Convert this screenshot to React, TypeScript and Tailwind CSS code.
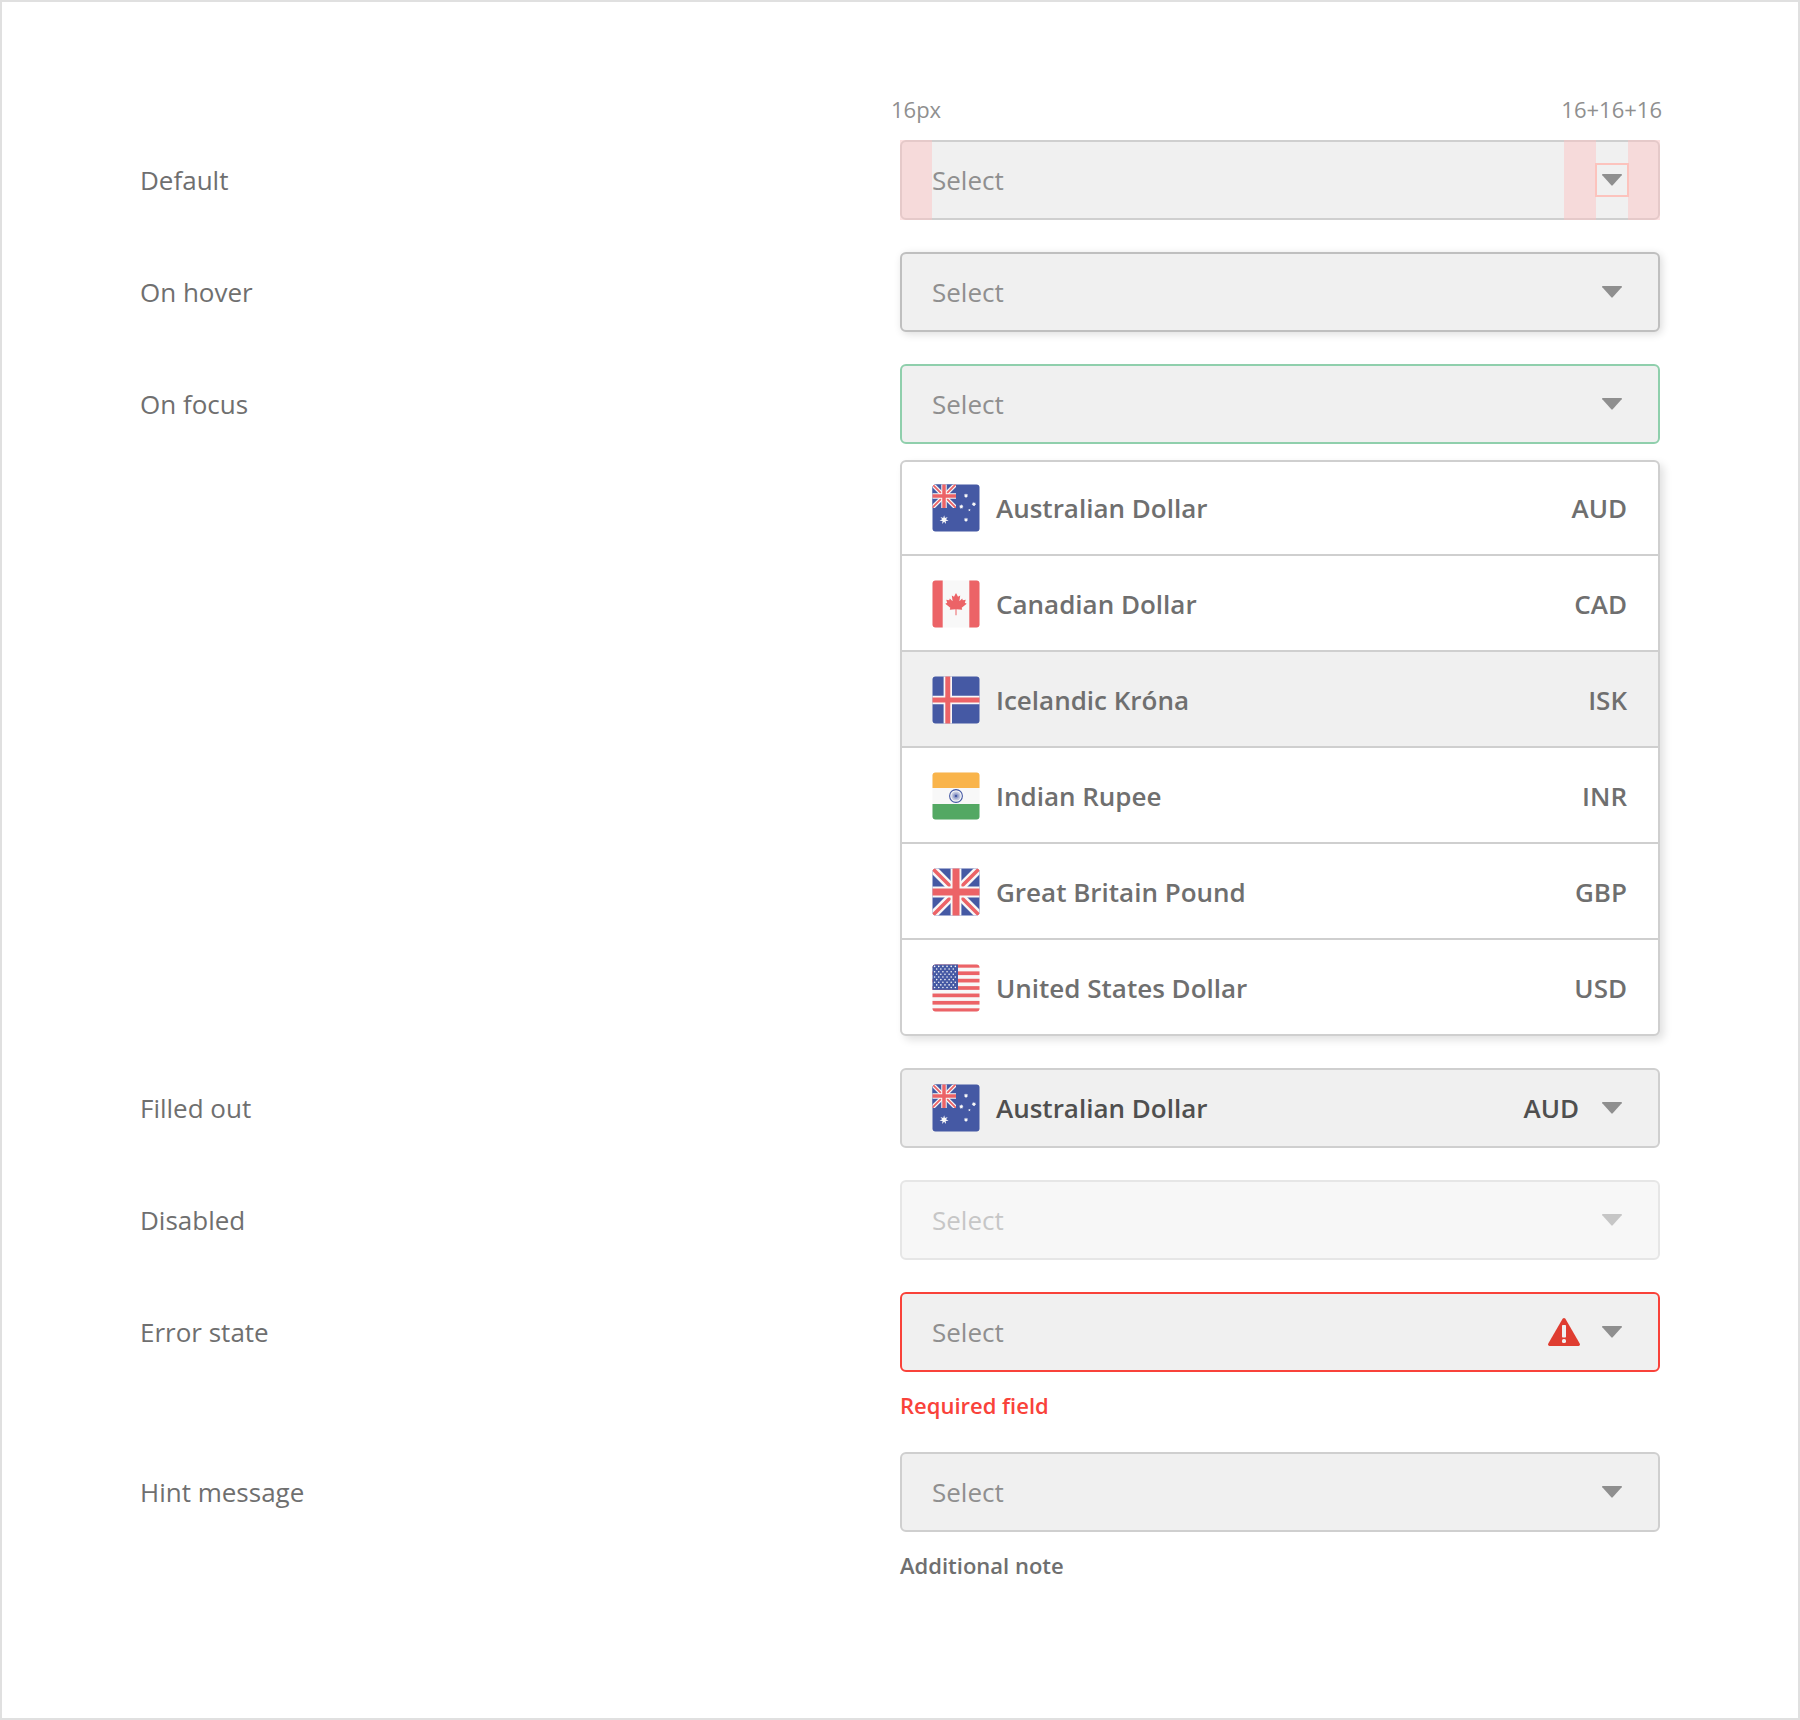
import type { ReactNode } from "react";

const BLUE = "#4559a4";
const RED = "#ec6367";
const WHITE = "#f8f8f8";

function Flag({ id, children }: { id: string; children: ReactNode }) {
  return (
    <svg viewBox="0 0 48 48" className="size-12 shrink-0">
      <clipPath id={id}>
        <rect x="0.5" y="0.5" width="47" height="47" rx="3" />
      </clipPath>
      <g clipPath={`url(#${id})`}>{children}</g>
    </svg>
  );
}

function UnionJack() {
  return (
    <>
      <rect width="48" height="48" fill={BLUE} />
      <path d="M0 0L48 48M48 0L0 48" stroke={WHITE} strokeWidth="8.4" />
      <path d="M0 0L18.6 18.6M48 0L29.4 18.6M0 48L18.6 29.4M48 48L29.4 29.4" stroke={RED} strokeWidth="3.6" />
      <path d="M24 0V48M0 24H48" stroke={WHITE} strokeWidth="10.8" />
      <path d="M24 0V48M0 24H48" stroke={RED} strokeWidth="7" />
    </>
  );
}

function starPoints(cx: number, cy: number, outer: number, inner: number, n: number) {
  return Array.from({ length: n * 2 }, (_, i) => {
    const r = i % 2 ? inner : outer;
    const a = (Math.PI * i) / n - Math.PI / 2;
    return `${(cx + r * Math.cos(a)).toFixed(2)},${(cy + r * Math.sin(a)).toFixed(2)}`;
  }).join(" ");
}

function AustraliaFlag({ id }: { id: string }) {
  return (
    <Flag id={id}>
      <rect width="48" height="48" fill={BLUE} />
      <svg width="24" height="24" viewBox="0 0 48 48">
        <UnionJack />
      </svg>
      <polygon points={starPoints(12.1, 35.8, 4.6, 2, 7)} fill={WHITE} />
      {[
        [34, 11.7],
        [29.3, 22.6],
        [41.9, 20.1],
        [34, 35.8],
      ].map(([x, y]) => (
        <polygon key={`${x}-${y}`} points={starPoints(x, y, 2.3, 1.3, 7)} fill={WHITE} />
      ))}
      <polygon points={starPoints(37.4, 26.1, 1.4, 0.6, 5)} fill={WHITE} />
    </Flag>
  );
}

function CanadaFlag() {
  return (
    <Flag id="flag-ca">
      <rect width="48" height="48" fill={WHITE} />
      <path d="M0 0H10.7V48H0zM37.3 0H48V48H37.3z" fill={RED} />
      <path
        d="M24 13L26 16.7L28.2 15.6L27.4 21.2L30.2 18.5L30.8 20.2L33.8 19.7L32.8 22.7L34.7 23.7L29.7 27.7L30.2 29.8L24.5 29.2V35.3H23.5V29.2L17.8 29.8L18.3 27.7L13.3 23.7L15.2 22.7L14.2 19.7L17.2 20.2L17.8 18.5L20.6 21.2L19.8 15.6L22 16.7z"
        fill={RED}
      />
    </Flag>
  );
}

function IcelandFlag() {
  return (
    <Flag id="flag-is">
      <rect width="48" height="48" fill={BLUE} />
      <path d="M15.8 0V48M0 24H48" stroke={WHITE} strokeWidth="8.4" />
      <path d="M15.8 0V48M0 24H48" stroke={RED} strokeWidth="5" />
    </Flag>
  );
}

function IndiaFlag() {
  return (
    <Flag id="flag-in">
      <rect width="48" height="48" fill={WHITE} />
      <rect width="48" height="16" fill="#f9b44b" />
      <rect y="32" width="48" height="16" fill="#53a863" />
      <circle cx="24" cy="24" r="6.4" fill="none" stroke={BLUE} strokeWidth="1.1" />
      <circle cx="24" cy="24" r="4.6" fill={BLUE} opacity="0.3" />
      <circle cx="24" cy="24" r="2.8" fill={BLUE} opacity="0.35" />
      <circle cx="24" cy="24" r="1.3" fill={BLUE} />
    </Flag>
  );
}

function BritainFlag() {
  return (
    <Flag id="flag-gb">
      <UnionJack />
    </Flag>
  );
}

function UsaFlag() {
  const stripe = 48 / 13;
  return (
    <Flag id="flag-us">
      <rect width="48" height="48" fill={WHITE} />
      {Array.from({ length: 7 }, (_, i) => (
        <rect key={i} y={i * 2 * stripe} width="48" height={stripe} fill={RED} />
      ))}
      <rect width="26" height={stripe * 7} fill={BLUE} />
      {Array.from({ length: 9 }, (_, row) =>
        Array.from({ length: row % 2 ? 5 : 6 }, (_, col) => (
          <circle
            key={`${row}-${col}`}
            cx={2.6 + col * 4.15 + (row % 2 ? 2.08 : 0)}
            cy={2.4 + row * 2.64}
            r="0.8"
            fill={WHITE}
          />
        )),
      )}
    </Flag>
  );
}

function Caret() {
  return (
    <svg viewBox="0 0 32 32" className="size-8 shrink-0">
      <path d="M6.6 10H25.4Q26.4 10.3 25.7 11.2L16.7 21.3Q16 22 15.3 21.3L6.3 11.2Q5.6 10.3 6.6 10z" fill="#8f8f8f" />
    </svg>
  );
}

function WarningIcon() {
  return (
    <svg viewBox="0 0 32 28" className="h-7 w-8 shrink-0">
      <path d="M14.6 0.8Q16 -0.8 17.4 0.8L31.7 25.6Q32.4 27.6 30.6 28H1.4Q-0.4 27.6 0.3 25.6z" fill="#df3d31" />
      <rect x="14" y="7" width="4" height="12.6" rx="0.8" fill="#f0f0f0" />
      <rect x="14" y="21" width="4" height="4" rx="1.6" fill="#f0f0f0" />
    </svg>
  );
}

function SelectBox({ className = "border-[#cfcfcf]", children }: { className?: string; children: ReactNode }) {
  return (
    <div className={`relative flex h-20 w-[760px] items-center rounded-[6px] border-2 bg-[#f0f0f0] px-[30px] ${className}`}>
      {children}
    </div>
  );
}

function Placeholder() {
  return <span className="grow text-[#8f8f8f]">Select</span>;
}

function Row({ label, className = "mt-8", children }: { label: string; className?: string; children: ReactNode }) {
  return (
    <div className={`flex items-start ${className}`}>
      <div className="flex h-20 w-[760px] items-center text-[#6f6f6f]">{label}</div>
      <div>{children}</div>
    </div>
  );
}

const currencies = [
  { name: "Australian Dollar", code: "AUD", flag: <AustraliaFlag id="flag-au" /> },
  { name: "Canadian Dollar", code: "CAD", flag: <CanadaFlag /> },
  { name: "Icelandic Króna", code: "ISK", flag: <IcelandFlag />, active: true },
  { name: "Indian Rupee", code: "INR", flag: <IndiaFlag /> },
  { name: "Great Britain Pound", code: "GBP", flag: <BritainFlag /> },
  { name: "United States Dollar", code: "USD", flag: <UsaFlag /> },
];

export default function App() {
  return (
    <div className="h-[1720px] w-[1800px] border-2 border-[#e0e0e0] bg-white pt-[90px] pl-[138px] font-['Open_Sans',sans-serif] text-[26px] leading-9">
      <div className="ml-[751px] flex h-12 w-[771px] justify-between pt-0.5 text-[22px] leading-[30px] text-[#8f8f8f]">
        <span>16px</span>
        <span>16+16+16</span>
      </div>

      <Row label="Default" className="">
        <SelectBox>
          <Placeholder />
          <Caret />
          <span className="absolute -top-0.5 -left-0.5 h-20 w-8 bg-[#fcc4c4]/50" />
          <span className="absolute -top-0.5 right-[62px] h-20 w-8 bg-[#fcc4c4]/50" />
          <span className="absolute -top-0.5 -right-0.5 h-20 w-8 bg-[#fcc4c4]/50" />
          <span className="absolute top-[21px] right-[29px] size-[34px] border-2 border-[#fcc3bd]" />
        </SelectBox>
      </Row>

      <Row label="On hover">
        <SelectBox className="border-[#bfbfbf] shadow-[2px_2px_8px_rgba(0,0,0,0.14)]">
          <Placeholder />
          <Caret />
        </SelectBox>
      </Row>

      <Row label="On focus">
        <SelectBox className="border-[#8fcfac]">
          <Placeholder />
          <Caret />
        </SelectBox>
        <ul className="mt-4 w-[760px] overflow-hidden rounded-[6px] border-2 border-[#cfcfcf] bg-white font-semibold text-[#6f6f6f] shadow-[4px_4px_8px_rgba(0,0,0,0.12)]">
          {currencies.map((c) => (
            <li
              key={c.code}
              className={`flex h-24 items-center border-b-2 border-[#cfcfcf] px-[30px] pt-0.5 first:h-[94px] first:pt-0 last:h-[94px] last:border-b-0 ${c.active ? "bg-[#f0f0f0]" : ""}`}
            >
              {c.flag}
              <span className="ml-4 grow">{c.name}</span>
              <span className="mr-px">{c.code}</span>
            </li>
          ))}
        </ul>
      </Row>

      <Row label="Filled out">
        <SelectBox>
          <AustraliaFlag id="flag-au-selected" />
          <span className="ml-4 grow font-semibold text-[#4f4f4f]">Australian Dollar</span>
          <span className="mr-[17px] font-semibold text-[#4f4f4f]">AUD</span>
          <Caret />
        </SelectBox>
      </Row>

      <Row label="Disabled">
        <SelectBox className="border-[#cfcfcf] opacity-50">
          <Placeholder />
          <Caret />
        </SelectBox>
      </Row>

      <Row label="Error state">
        <SelectBox className="border-[#f9423a]">
          <Placeholder />
          <span className="mr-4">
            <WarningIcon />
          </span>
          <Caret />
        </SelectBox>
        <p className="mt-[18px] text-[22px] leading-[30px] font-semibold text-[#f9423a]">Required field</p>
      </Row>

      <Row label="Hint message">
        <SelectBox>
          <Placeholder />
          <Caret />
        </SelectBox>
        <p className="mt-[18px] text-[22px] leading-[30px] font-semibold text-[#6f6f6f]">Additional note</p>
      </Row>
    </div>
  );
}
